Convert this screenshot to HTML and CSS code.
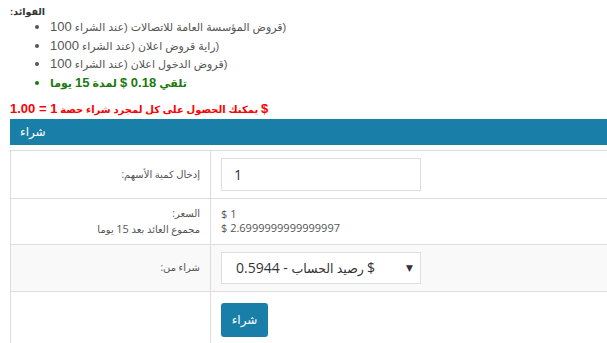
FILE: index.html
```html
<!DOCTYPE html>
<html lang="ar">
<head>
<meta charset="utf-8">
<title>شراء</title>
<link rel="stylesheet" href="styles.css">
</head>
<body>
<div class="page">
  <div class="benefits-title"><span dir="rtl">الفوائد:</span></div>
  <ul class="benefits">
    <li>قروض المؤسسة العامة للاتصالات (عند الشراء <span class="num">100</span><bdi>)</bdi></li>
    <li>راية قروض اعلان (عند الشراء <span class="num">1000</span><bdi>)</bdi></li>
    <li>قروض الدخول اعلان (عند الشراء <span class="num">100</span><bdi>)</bdi></li>
    <li class="gain"><span dir="rtl">تلقي <span class="num">0.18 $</span> لمدة <span class="num">15</span> يوما</span></li>
  </ul>
  <p class="offer">يمكنك الحصول على كل لمجرد شراء حصة <span class="num">1 = 1.00</span> <span class="num">$</span></p>

  <div class="panel">
    <div class="panel-head">شراء</div>
    <table class="buy-table">
      <tr>
        <td class="label" dir="rtl">إدخال كمية الأسهم:</td>
        <td class="value"><input class="qty" type="text" value="1"></td>
      </tr>
      <tr>
        <td class="label" dir="rtl">السعر:<br>مجموع العائد بعد <span class="lnum">15</span> يوما</td>
        <td class="value money">$ 1<br>$ 2.6999999999999997</td>
      </tr>
      <tr class="shaded">
        <td class="label" dir="rtl">شراء من:</td>
        <td class="value">
          <div class="select-wrap">
            <div class="select"><span class="snum">0.5944 - </span>رصيد الحساب <span class="snum">$</span></div>
            <span class="caret">▼</span>
          </div>
        </td>
      </tr>
      <tr>
        <td class="label"></td>
        <td class="value btn-cell"><button class="btn">شراء</button></td>
      </tr>
    </table>
  </div>
</div>
</body>
</html>
```
FILE: styles.css
```css
html, body {
  margin: 0;
  padding: 0;
  overflow: hidden;
  background: #fff;
}
body {
  font-family: "Liberation Sans", "DejaVu Sans", sans-serif;
  color: #555;
  font-size: 11px;
}
.page {
  padding: 6px 0 0 10px;
  width: 640px;
}
.num {
  font-size: 13px;
}
.benefits-title {
  font-size: 9.5px;
  font-weight: bold;
  color: #333;
  line-height: 12px;
}
.benefits {
  margin: 0;
  padding-left: 40px;
  line-height: 18.7px;
  font-size: 11px;
  color: #555;
}
.benefits li::marker {
  font-size: 13px;
}
.benefits .gain {
  color: #1a7a0e;
  font-weight: bold;
}
.offer {
  margin: 7px 0 0;
  line-height: 18px;
  color: #f00;
  font-weight: bold;
  font-size: 10px;
}
.panel-head {
  background: #1a7fa8;
  color: #fff;
  height: 26px;
  line-height: 26px;
  padding: 0 10px;
  font-size: 12px;
  margin-bottom: 5px;
}
.buy-table {
  border-collapse: collapse;
  width: 100%;
  font-family: "Open Sans", "DejaVu Sans", sans-serif;
}
.buy-table td {
  border: 1px solid #ddd;
  padding: 7px 10px;
  vertical-align: middle;
}
.buy-table .label {
  width: 179px;
  text-align: right;
  font-size: 10px;
  color: #555;
  line-height: 15px;
}
.lnum {
  font-size: 11px;
}
.buy-table .value {
  font-size: 11px;
  color: #555;
  line-height: 14.5px;
}
.shaded td {
  background: #f9f9f9;
}
.qty {
  display: block;
  box-sizing: border-box;
  width: 200px;
  height: 33px;
  border: 1px solid #ddd;
  padding: 0 12px;
  font-family: "Open Sans", sans-serif;
  font-size: 14px;
  color: #333;
  outline: none;
}
.select-wrap {
  position: relative;
  width: 200px;
}
.select {
  box-sizing: border-box;
  height: 32px;
  line-height: 30px;
  border: 1px solid #ddd;
  background: #fff;
  padding: 0 14px;
  font-size: 12.5px;
  color: #333;
}
.snum {
  font-size: 14px;
}
.caret {
  position: absolute;
  right: 8px;
  top: 9px;
  font-size: 9px;
  color: #333;
}
.btn-cell {
  padding-top: 11px !important;
}
.btn {
  display: block;
  width: 47px;
  height: 34px;
  border: none;
  border-radius: 3px;
  background: #1a7fa8;
  color: #fff;
  font-family: "Open Sans", "DejaVu Sans", sans-serif;
  font-size: 12px;
  padding: 0;
}
```
